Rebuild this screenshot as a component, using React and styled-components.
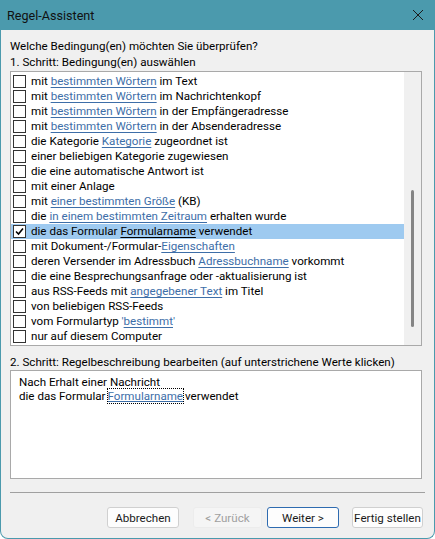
import React from 'react';
import styled, { createGlobalStyle } from 'styled-components';

const GlobalStyle = createGlobalStyle`
  html, body {
    margin: 0;
    padding: 0;
    background: #ffffff;
  }
  body {
    font-family: Roboto, "Noto Sans", "Liberation Sans", sans-serif;
    font-size: 11.6px;
    color: #000;
  }
`;

const Window = styled.div`
  width: 435px;
  height: 539px;
  box-sizing: border-box;
  border: 1px solid #4b9aad;
  border-top: none;
  border-radius: 0 0 8px 8px;
  background: #f0f0f0;
  display: flex;
  flex-direction: column;
  overflow: hidden;
`;

const TitleBar = styled.div`
  height: 30px;
  background: #4b9aad;
  display: flex;
  align-items: center;
  justify-content: space-between;
  padding: 0 9px 0 7px;
  margin: 0 -1px;
  font-size: 12.6px;
  color: #111;
`;

const CloseIcon = styled.svg`
  width: 12px;
  height: 12px;
  margin-right: 2px;
`;

const Body = styled.div`
  flex: 1;
  display: flex;
  flex-direction: column;
  padding: 8px 12px 0 9px;
`;

const Label = styled.div`
  line-height: 16px;
  white-space: nowrap;
  margin-top: ${p => p.$top || 0}px;
`;

const ListBox = styled.div`
  margin-top: 1px;
  height: 275px;
  box-sizing: border-box;
  border: 1px solid #a9a9a9;
  background: #fff;
  display: flex;
`;

const Rows = styled.div`
  flex: 1;
  padding-top: 2px;
`;

const Row = styled.div`
  height: 15px;
  line-height: 15px;
  display: flex;
  align-items: center;
  background: ${p => (p.$selected ? '#9ecaf0' : 'transparent')};
  white-space: nowrap;
`;

const Check = styled.span`
  width: 11px;
  height: 11px;
  margin: 0 5px 0 2px;
  border: 1px solid #333;
  background: #fff;
  display: flex;
  align-items: center;
  justify-content: center;
  flex-shrink: 0;
`;

const Link = styled.span`
  color: ${p => (p.$plain ? '#000' : '#3d6ea8')};
  text-decoration: underline;
  text-underline-offset: 2px;
`;

const ScrollTrack = styled.div`
  width: 17px;
  background: #f0f0f0;
  display: flex;
  justify-content: center;
`;

const Thumb = styled.div`
  width: 3px;
  height: 137px;
  margin-top: 118px;
  border-radius: 2px;
  background: #858585;
`;

const DescBox = styled.div`
  height: 109px;
  box-sizing: border-box;
  border: 1px solid #a9a9a9;
  background: #fff;
  padding: 4px 8px;
  line-height: 14px;
`;

const FocusLink = styled.span`
  color: #3d6ea8;
  text-decoration: underline;
  outline: 1px dotted #000;
  outline-offset: 0;
  margin: 0 2px;
`;

const Separator = styled.div`
  margin: 13px -3px 0 0;
  height: 1px;
  background: #a0a0a0;
`;

const ButtonRow = styled.div`
  display: flex;
  justify-content: flex-end;
  margin: 14px -1px 0 0;
`;

const Button = styled.button`
  font-family: inherit;
  font-size: 11.6px;
  white-space: nowrap;
  height: 21px;
  width: ${p => p.$w}px;
  margin-left: ${p => p.$gap}px;
  padding: 0;
  border-radius: 3px;
  border: 1px solid ${p => (p.$primary ? '#2e6bb0' : p.disabled ? '#ececec' : '#d0d0d0')};
  background: ${p => (p.disabled ? '#f5f5f5' : '#fdfdfd')};
  color: ${p => (p.disabled ? '#a0a0a0' : '#1a1a1a')};
`;

const conditions = [
  ['mit ', { l: 'bestimmten Wörtern' }, ' im Text'],
  ['mit ', { l: 'bestimmten Wörtern' }, ' im Nachrichtenkopf'],
  ['mit ', { l: 'bestimmten Wörtern' }, ' in der Empfängeradresse'],
  ['mit ', { l: 'bestimmten Wörtern' }, ' in der Absenderadresse'],
  ['die Kategorie ', { l: 'Kategorie' }, ' zugeordnet ist'],
  ['einer beliebigen Kategorie zugewiesen'],
  ['die eine automatische Antwort ist'],
  ['mit einer Anlage'],
  ['mit ', { l: 'einer bestimmten Größe' }, ' (KB)'],
  ['die ', { l: 'in einem bestimmten Zeitraum' }, ' erhalten wurde'],
  ['die das Formular ', { l: 'Formularname', plain: true }, ' verwendet'],
  ['mit Dokument-/Formular-', { l: 'Eigenschaften' }],
  ['deren Versender im Adressbuch ', { l: 'Adressbuchname' }, ' vorkommt'],
  ['die eine Besprechungsanfrage oder -aktualisierung ist'],
  ['aus RSS-Feeds mit ', { l: 'angegebener Text' }, ' im Titel'],
  ['von beliebigen RSS-Feeds'],
  ['vom Formulartyp ', { q: 'bestimmt' }],
  ['nur auf diesem Computer'],
];

const SELECTED = 10;

const renderPart = (part, i, selected) => {
  if (typeof part === 'string') return <span key={i}>{part}</span>;
  if (part.q) {
    return (
      <span key={i} style={{ color: '#3d6ea8' }}>
        '<Link>{part.q}</Link>'
      </span>
    );
  }
  return <Link key={i} $plain={part.plain && selected}>{part.l}</Link>;
};

const App = () => {
  return (
    <>
      <GlobalStyle />
      <Window>
        <TitleBar>
          <span>Regel-Assistent</span>
          <CloseIcon viewBox="0 0 12 12">
            <path d="M1 1 L11 11 M11 1 L1 11" stroke="#1b1b1b" strokeWidth="1" fill="none" />
          </CloseIcon>
        </TitleBar>
        <Body>
          <Label>Welche Bedingung(en) möchten Sie überprüfen?</Label>
          <Label>1. Schritt: Bedingung(en) auswählen</Label>
          <ListBox>
            <Rows>
              {conditions.map((parts, idx) => (
                <Row key={idx} $selected={idx === SELECTED}>
                  <Check>
                    {idx === SELECTED && (
                      <svg width="9" height="9" viewBox="0 0 9 9">
                        <path d="M1 4.5 L3.5 7 L8 1.5" stroke="#000" strokeWidth="1.6" fill="none" />
                      </svg>
                    )}
                  </Check>
                  <span>{parts.map((p, i) => renderPart(p, i, idx === SELECTED))}</span>
                </Row>
              ))}
            </Rows>
            <ScrollTrack>
              <Thumb />
            </ScrollTrack>
          </ListBox>
          <Label $top={8}>2. Schritt: Regelbeschreibung bearbeiten (auf unterstrichene Werte klicken)</Label>
          <DescBox>
            <div>Nach Erhalt einer Nachricht</div>
            <div>
              die das Formular<FocusLink>Formularname</FocusLink>verwendet
            </div>
          </DescBox>
          <Separator />
          <ButtonRow>
            <Button $w={72} $gap={0}>Abbrechen</Button>
            <Button $w={69} $gap={14} disabled>&lt; Zurück</Button>
            <Button $w={72} $gap={5} $primary>Weiter &gt;</Button>
            <Button $w={71} $gap={13}>Fertig stellen</Button>
          </ButtonRow>
        </Body>
      </Window>
    </>
  );
};

export default App;
